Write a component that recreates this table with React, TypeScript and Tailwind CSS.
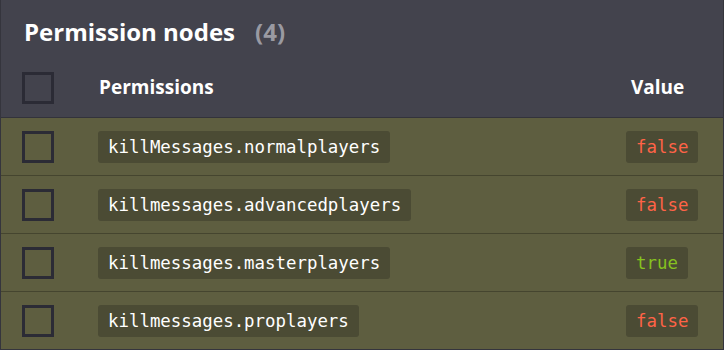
import React from "react";

const rows = [
  { p: "killMessages.normalplayers", v: false },
  { p: "killmessages.advancedplayers", v: false },
  { p: "killmessages.masterplayers", v: true },
  { p: "killmessages.proplayers", v: false },
];

const sans = { fontFamily: '"Open Sans", "Noto Sans", sans-serif' };
const mono = { fontFamily: '"DejaVu Sans Mono", "Liberation Mono", monospace' };

function Box() {
  return <div className="w-8 h-8 border-[3px] border-[#2b2b35] shrink-0" />;
}

export default function App() {
  return (
    <div className="w-[724px] h-[350px] bg-[#43434d] border-l border-r border-b border-[#35353d] overflow-hidden" style={sans}>
      <div className="h-[58px] flex items-center pl-[23px] pt-[6px]">
        <span className="text-white font-bold text-[24px]">Permission nodes</span>
        <span className="text-[#9a9aa2] font-bold text-[24px] ml-[20px]">(4)</span>
      </div>
      <div className="h-[60px] flex items-center border-b border-[#33333b]">
        <div className="ml-[21px]"><Box /></div>
        <div className="ml-[45px] text-white font-bold text-[19px] flex-1">Permissions</div>
        <div className="w-[92px] text-white font-bold text-[19px]">Value</div>
      </div>
      {rows.map((r) => (
        <div key={r.p} className="h-[58px] flex items-center bg-[#5e5e40] border-b border-[#45452f]">
          <div className="ml-[21px]"><Box /></div>
          <div className="ml-[44px] flex-1">
            <span className="inline-block bg-[#4b4b34] rounded-[3px] px-[10px] h-8 leading-8 text-[17.4px] text-white" style={mono}>
              {r.p}
            </span>
          </div>
          <div className="w-[97px]">
            <span
              className={
                "inline-block bg-[#4b4b34] rounded-[3px] px-[10px] h-8 leading-8 text-[17.4px] " +
                (r.v ? "text-[#86c21f]" : "text-[#ff6347]")
              }
              style={mono}
            >
              {r.v ? "true" : "false"}
            </span>
          </div>
        </div>
      ))}
    </div>
  );
}
